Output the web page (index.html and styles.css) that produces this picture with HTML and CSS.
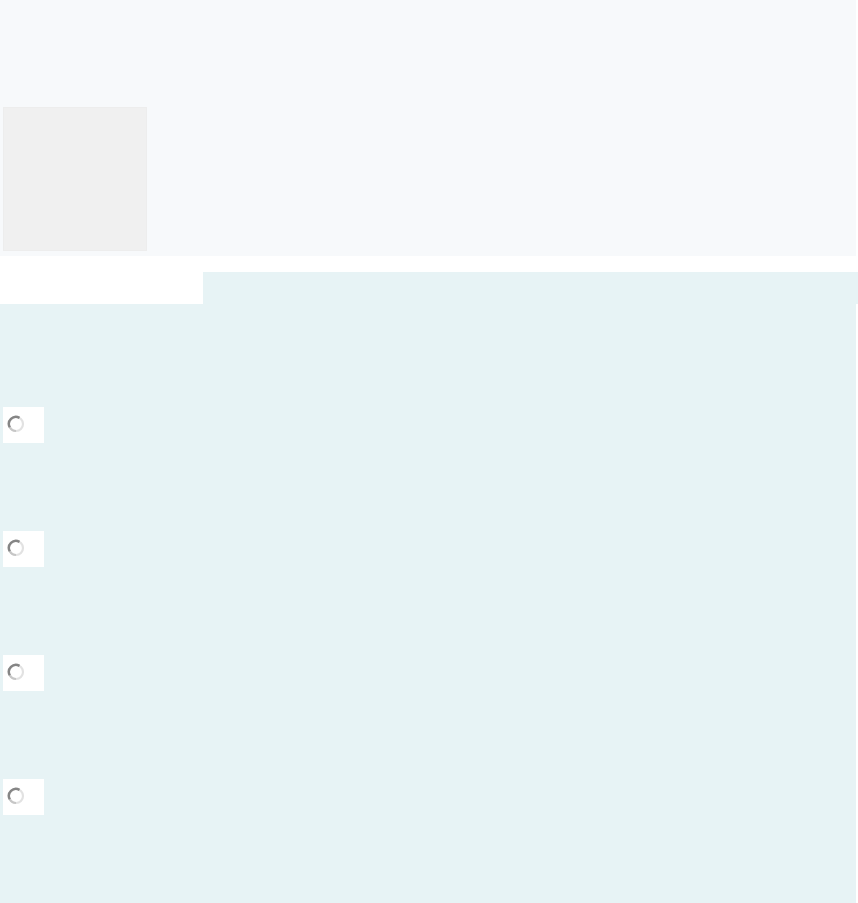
FILE: index.html
```html
<!DOCTYPE html>
<html>
<head>
<meta charset="utf-8">
<link rel="stylesheet" href="styles.css">
</head>
<body>
<header class="header">
  <div class="thumb"></div>
</header>
<div class="tabrow"><div class="tab"></div></div>
<main class="main">
  <div class="item"><svg class="spin" viewBox="0 0 18 18"><circle cx="9" cy="9" r="7" fill="none" stroke="#e2e2e2" stroke-width="2.2"/><path d="M12.5 2.9 A7 7 0 0 0 2.9 12.5" fill="none" stroke="#858585" stroke-width="2.4"/><path d="M2.9 12.5 A7 7 0 0 0 9 16" fill="none" stroke="#c6c6c6" stroke-width="2.2"/></svg></div>
  <div class="item"><svg class="spin" viewBox="0 0 18 18"><circle cx="9" cy="9" r="7" fill="none" stroke="#e2e2e2" stroke-width="2.2"/><path d="M12.5 2.9 A7 7 0 0 0 2.9 12.5" fill="none" stroke="#858585" stroke-width="2.4"/><path d="M2.9 12.5 A7 7 0 0 0 9 16" fill="none" stroke="#c6c6c6" stroke-width="2.2"/></svg></div>
  <div class="item"><svg class="spin" viewBox="0 0 18 18"><circle cx="9" cy="9" r="7" fill="none" stroke="#e2e2e2" stroke-width="2.2"/><path d="M12.5 2.9 A7 7 0 0 0 2.9 12.5" fill="none" stroke="#858585" stroke-width="2.4"/><path d="M2.9 12.5 A7 7 0 0 0 9 16" fill="none" stroke="#c6c6c6" stroke-width="2.2"/></svg></div>
  <div class="item"><svg class="spin" viewBox="0 0 18 18"><circle cx="9" cy="9" r="7" fill="none" stroke="#e2e2e2" stroke-width="2.2"/><path d="M12.5 2.9 A7 7 0 0 0 2.9 12.5" fill="none" stroke="#858585" stroke-width="2.4"/><path d="M2.9 12.5 A7 7 0 0 0 9 16" fill="none" stroke="#c6c6c6" stroke-width="2.2"/></svg></div>
</main>
</body>
</html>
```
FILE: styles.css
```css
html, body {
  margin: 0;
  padding: 0;
  background: #ffffff;
  font-family: "Liberation Sans", Arial, sans-serif;
  overflow: hidden;
}
.header {
  width: 856px;
  height: 256px;
  box-sizing: border-box;
  padding: 107px 0 0 3px;
  background: #f7f9fb;
}
.thumb {
  width: 144px;
  height: 144px;
  box-sizing: border-box;
  background: #f0f0f0;
  border: 1px solid #ededed;
}
.tabrow {
  margin-top: 16px;
  display: flex;
  justify-content: flex-end;
}
.tab {
  width: 655px;
  height: 32px;
  background: #e7f3f5;
}
.main {
  width: 856px;
  height: 599px;
  box-sizing: border-box;
  background: #e7f3f5;
  padding: 103px 0 0 3px;
  display: flex;
  flex-direction: column;
  gap: 88px;
}
.item {
  width: 41px;
  height: 36px;
  background: #ffffff;
  box-sizing: border-box;
  padding: 8px 0 0 4px;
}
.spin {
  width: 18px;
  height: 18px;
  display: block;
}
```
